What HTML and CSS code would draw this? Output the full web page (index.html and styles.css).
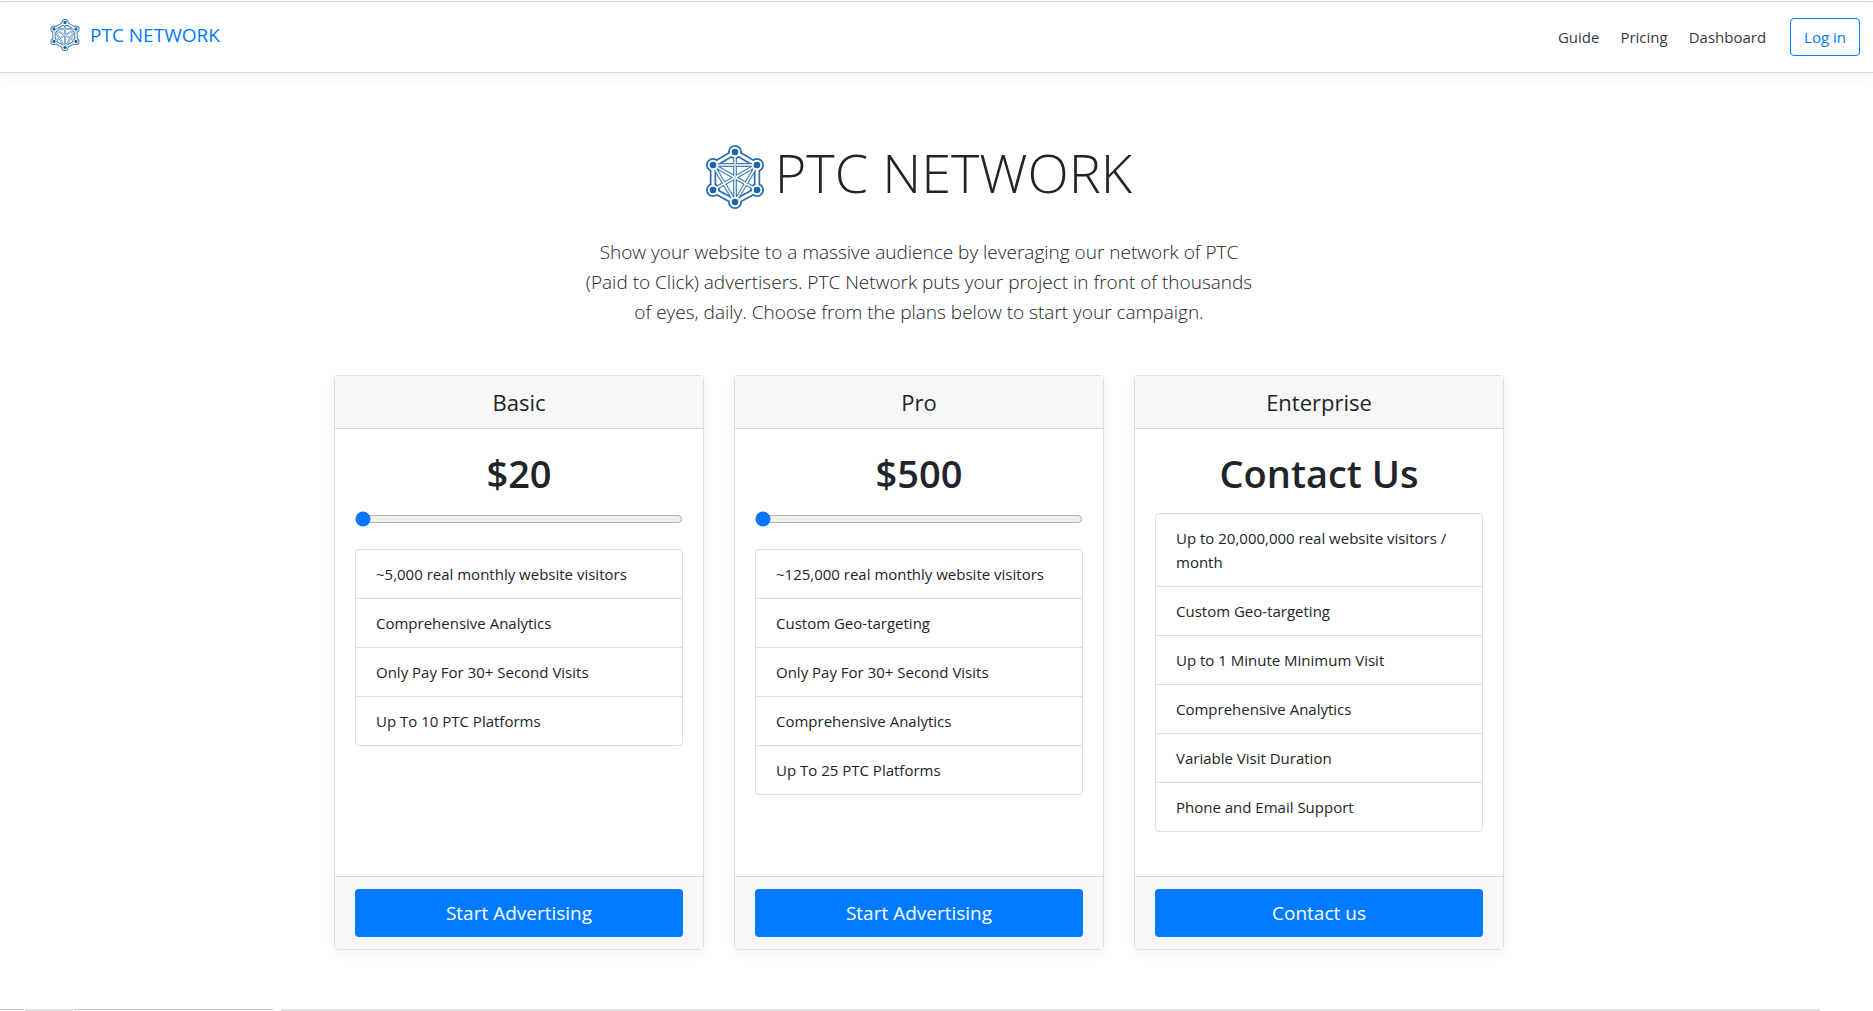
FILE: index.html
```html
<!DOCTYPE html>
<html lang="en">
<head>
    <meta charset="UTF-8">
    <meta name="viewport" content="width=device-width, initial-scale=1.0">
    <title>PTC Network</title>
    <link rel="stylesheet" href="styles.css">
</head>
<body>
    <svg class="sprite" aria-hidden="true">
        <symbol id="logo" viewBox="0 0 58 64">
            <!-- ring behind the outer nodes and edges -->
            <path fill="none" stroke="#2a6fae" stroke-width="6.4" d="M29 7 51 20V45L29 57 7 45V20Z"/>
            <g fill="#2a6fae">
                <circle cx="29" cy="7" r="7"/><circle cx="51" cy="20" r="7"/><circle cx="51" cy="45" r="7"/>
                <circle cx="29" cy="57" r="7"/><circle cx="7" cy="45" r="7"/><circle cx="7" cy="20" r="7"/>
            </g>
            <path fill="none" stroke="#fff" stroke-width="3" d="M29 7 51 20V45L29 57 7 45V20Z"/>
            <!-- inner links -->
            <path fill="none" stroke="#3f7fba" stroke-width="3.8" d="M7 20H51M29 7V57M7 20 51 45M51 20 7 45M7 20 29 57 51 20"/>
            <path fill="none" stroke="#fff" stroke-width="1.6" d="M7 20H51M7 20 51 45M51 20 7 45M7 20 29 57 51 20"/>
            <path fill="none" stroke="#c3d8ea" stroke-width="2" d="M29 7V57"/>
            <g fill="#fff">
                <circle cx="29" cy="7" r="5.2"/><circle cx="51" cy="20" r="5.2"/><circle cx="51" cy="45" r="5.2"/>
                <circle cx="29" cy="57" r="5.2"/><circle cx="7" cy="45" r="5.2"/><circle cx="7" cy="20" r="5.2"/>
            </g>
            <g fill="#1b65a8">
                <circle cx="29" cy="7" r="3.3"/><circle cx="51" cy="20" r="3.3"/><circle cx="51" cy="45" r="3.3"/>
                <circle cx="29" cy="57" r="3.3"/><circle cx="7" cy="45" r="3.3"/><circle cx="7" cy="20" r="3.3"/>
            </g>
        </symbol>
    </svg>

    <header class="navbar">
        <a class="brand" href="#">
            <svg class="brand-logo" aria-hidden="true"><use href="#logo"/></svg>
            PTC NETWORK
        </a>
        <nav class="nav-links">
            <a href="#guide">Guide</a>
            <a href="#pricing">Pricing</a>
            <a href="#dashboard">Dashboard</a>
        </nav>
        <a class="btn-outline" href="#login">Log in</a>
    </header>

    <main>
        <section class="pricing-header">
            <h1 class="display">
                <svg class="display-logo" aria-hidden="true"><use href="#logo"/></svg>
                <span class="display-text">PTC NETWORK</span>
            </h1>
            <p class="lead">Show your website to a massive audience by leveraging our network of PTC (Paid to Click) advertisers. PTC Network puts your project in front of thousands of eyes, daily. Choose from the plans below to start your campaign.</p>
        </section>

        <section class="card-deck" id="pricing">
            <div class="card">
                <div class="card-header"><h4>Basic</h4></div>
                <div class="card-body">
                    <h2 class="price">$20</h2>
                    <input type="range" class="slider" min="20" max="500" value="20" aria-label="Basic plan budget">
                    <ul class="list-group">
                        <li>~5,000 real monthly website visitors</li>
                        <li>Comprehensive Analytics</li>
                        <li>Only Pay For 30+ Second Visits</li>
                        <li>Up To 10 PTC Platforms</li>
                    </ul>
                </div>
                <div class="card-footer"><button type="button" class="btn-primary">Start Advertising</button></div>
            </div>

            <div class="card">
                <div class="card-header"><h4>Pro</h4></div>
                <div class="card-body">
                    <h2 class="price">$500</h2>
                    <input type="range" class="slider" min="500" max="5000" value="500" aria-label="Pro plan budget">
                    <ul class="list-group">
                        <li>~125,000 real monthly website visitors</li>
                        <li>Custom Geo-targeting</li>
                        <li>Only Pay For 30+ Second Visits</li>
                        <li>Comprehensive Analytics</li>
                        <li>Up To 25 PTC Platforms</li>
                    </ul>
                </div>
                <div class="card-footer"><button type="button" class="btn-primary">Start Advertising</button></div>
            </div>

            <div class="card">
                <div class="card-header"><h4>Enterprise</h4></div>
                <div class="card-body">
                    <h2 class="price">Contact Us</h2>
                    <ul class="list-group">
                        <li>Up to 20,000,000 real website visitors / month</li>
                        <li>Custom Geo-targeting</li>
                        <li>Up to 1 Minute Minimum Visit</li>
                        <li>Comprehensive Analytics</li>
                        <li>Variable Visit Duration</li>
                        <li>Phone and Email Support</li>
                    </ul>
                </div>
                <div class="card-footer"><button type="button" class="btn-primary">Contact us</button></div>
            </div>
        </section>
    </main>

    <div class="bottom-strip">
        <span class="thin short"></span>
        <span class="thick tab"></span>
        <span class="thin wide"></span>
        <span class="thick rest"></span>
    </div>
</body>
</html>
```

FILE: styles.css
```css
* {
    box-sizing: border-box;
}

body {
    margin: 0;
    min-height: 100vh;
    display: flex;
    flex-direction: column;
    font-family: "Segoe UI", "Open Sans", "Noto Sans", sans-serif;
    font-size: 15px;
    line-height: 24px;
    color: #212529;
    background: #fff;
}

a {
    text-decoration: none;
}

.sprite {
    display: none;
}

/* Navbar */
.navbar {
    display: flex;
    align-items: center;
    margin-top: 1px;
    height: 72px;
    padding: 0 13px 0 50px;
    border-top: 1px solid #dadada;
    border-bottom: 1px solid #d9dcdf;
    box-shadow: 0 4px 12px rgba(0, 0, 0, 0.05);
}

.brand {
    display: flex;
    align-items: center;
    gap: 10px;
    margin-right: auto;
    padding-bottom: 4px;
    font-size: 19px;
    color: #007bff;
}

.brand-logo {
    width: 30px;
    height: 32px;
}

.nav-links {
    display: flex;
    gap: 21px;
    margin-right: 24px;
}

.nav-links a {
    color: #343a40;
}

.btn-outline {
    padding: 6px 13px;
    border: 1px solid #007bff;
    border-radius: 4px;
    color: #007bff;
}

/* Heading */
main {
    padding-right: 35px;
}

.pricing-header {
    max-width: 700px;
    margin: 0 auto;
    padding: 64px 15px 48px;
    text-align: center;
}

.display {
    display: flex;
    align-items: center;
    justify-content: center;
    gap: 11px;
    margin: 0 0 20px;
    font-size: 54px;
    font-weight: 300;
    line-height: 70px;
    white-space: nowrap;
}

.display-text {
    padding-bottom: 10px;
}

.display-logo {
    width: 58px;
    height: 64px;
}

.lead {
    margin: 0;
    font-size: 19px;
    font-weight: 300;
    line-height: 30px;
}

/* Plans */
.card-deck {
    display: grid;
    grid-template-columns: repeat(3, 1fr);
    gap: 30px;
    max-width: 1200px;
    margin: 0 auto;
    padding: 0 15px;
}

.card {
    display: flex;
    flex-direction: column;
    border: 1px solid #dfdfdf;
    border-radius: 4px;
    box-shadow: 0 4px 12px rgba(0, 0, 0, 0.05);
}

.card-header {
    padding: 12px 20px;
    border-bottom: 1px solid #d8d8d8;
    background: #f7f7f7;
    text-align: center;
}

.card-header h4 {
    margin: 0;
    font-size: 22px;
    font-weight: 400;
    line-height: 28px;
}

.card-body {
    flex: 1;
    padding: 20px;
}

.price {
    margin: 0 0 8px;
    font-size: 38px;
    font-weight: 600;
    line-height: 48px;
    text-align: center;
}

.slider {
    display: block;
    width: 100%;
    height: 28px;
    margin: 0;
}

.list-group {
    margin: 16px 0 24px;
    padding: 0;
    list-style: none;
    border: 1px solid #dfdfdf;
    border-radius: 4px;
}

.list-group li {
    padding: 12px 20px;
}

.list-group li + li {
    border-top: 1px solid #dfdfdf;
}

.card-footer {
    padding: 12px 20px;
    border-top: 1px solid #d8d8d8;
    background: #f7f7f7;
}

.btn-primary {
    display: block;
    width: 100%;
    height: 48px;
    border: none;
    border-radius: 4px;
    background: #007bff;
    color: #fff;
    font-family: inherit;
    font-size: 19px;
    cursor: pointer;
}

/* Bottom strip */
.bottom-strip {
    display: flex;
    gap: 1px;
    height: 2px;
    margin-top: auto;
    padding-right: 53px;
}

.thin {
    height: 1px;
    background: #c8c8c8;
}

.thick {
    height: 2px;
    background: #e2e2e2;
}

.short {
    width: 24px;
}

.tab {
    width: 48px;
}

.wide {
    width: 200px;
    margin-right: 6px;
}

.rest {
    flex: 1;
}
```
